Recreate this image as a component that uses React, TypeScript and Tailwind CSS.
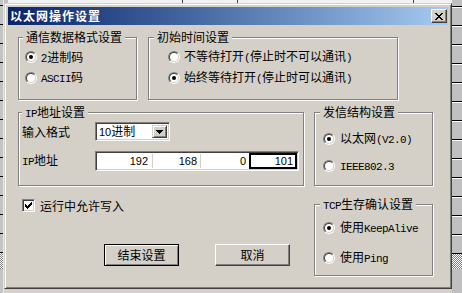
import React from 'react';

// half-width latin in the dialog font (SimSun-like, 6px per char)
const L: React.FC<{ children: React.ReactNode }> = ({ children }) => (
  <span className="font-['Liberation_Mono',monospace] text-[11px] tracking-[-0.6px]">{children}</span>
);

const Radio: React.FC<{ checked?: boolean }> = ({ checked }) => (
  <div className="w-[12px] h-[12px] shrink-0 rounded-full border border-t-[#808080] border-l-[#808080] border-r-white border-b-white">
    <div className="w-full h-full rounded-full border border-t-[#404040] border-l-[#404040] border-r-[#d4d0c8] border-b-[#d4d0c8] bg-white flex items-center justify-center">
      {checked && <div className="w-[4px] h-[4px] rounded-full bg-black" />}
    </div>
  </div>
);

const RadioRow: React.FC<{ checked?: boolean; gap: string; children: React.ReactNode }> = ({ checked, gap, children }) => (
  <div className={`flex items-center h-[12px] whitespace-nowrap ${gap}`}>
    <Radio checked={checked} />
    <span>{children}</span>
  </div>
);

const Group: React.FC<{ label: React.ReactNode; labelPos: string; className: string; children?: React.ReactNode }> = ({
  label,
  labelPos,
  className,
  children,
}) => (
  <div className={`relative shrink-0 border border-[#808080] shadow-[inset_1px_1px_0_#fff,1px_1px_0_#fff] ${className}`}>
    <div className={`absolute -top-[7px] px-[3px] bg-[#d4d0c8] leading-[12px] whitespace-nowrap ${labelPos}`}>{label}</div>
    {children}
  </div>
);

const CloseGlyph = () => (
  <svg width="8" height="7" viewBox="0 0 8 7" shapeRendering="crispEdges">
    <g fill="#000">
      <rect x="0" y="0" width="2" height="1" />
      <rect x="6" y="0" width="2" height="1" />
      <rect x="1" y="1" width="2" height="1" />
      <rect x="5" y="1" width="2" height="1" />
      <rect x="2" y="2" width="4" height="1" />
      <rect x="3" y="3" width="2" height="1" />
      <rect x="2" y="4" width="4" height="1" />
      <rect x="1" y="5" width="2" height="1" />
      <rect x="5" y="5" width="2" height="1" />
      <rect x="0" y="6" width="2" height="1" />
      <rect x="6" y="6" width="2" height="1" />
    </g>
  </svg>
);

const sunken =
  'border border-t-[#808080] border-l-[#808080] border-r-white border-b-white shadow-[inset_1px_1px_0_#404040,inset_-1px_-1px_0_#d4d0c8]';

const App: React.FC = () => {
  const leftCells = Array.from({ length: 13 });
  const rightCells = Array.from({ length: 13 });

  return (
    <div className="relative w-[462px] h-[293px] overflow-hidden bg-[#d4d0c8] text-black text-[12px] leading-[12px] font-['Noto_Sans_CJK_SC',sans-serif]">
      {/* desktop behind the dialog */}
      <div className="absolute left-0 top-0 w-full h-[3px] bg-[#f2f2f2] flex">
        <div className="w-[8px] h-full bg-[#c0c0c0]" />
        <div className="w-[175px] h-full border-r border-[#404040]" />
        <div className="w-[55px] h-full border-r border-[#404040]" />
        <div className="w-[176px] h-full border-r border-[#404040]" />
      </div>
      <div className="absolute left-0 top-0 w-[4px] h-full bg-[#c4c4c4] border-r border-[#e8e8e8] flex flex-col">
        <div className="h-[6px] shrink-0 border-b border-black" />
        {leftCells.map((_, i) => (
          <div key={i} className="h-[19px] shrink-0 border-b border-black" />
        ))}
        <div className="h-[16px] shrink-0 bg-[repeating-conic-gradient(#808080_0_25%,#fff_0_50%)] bg-[length:2px_2px]" />
      </div>
      <div className="absolute left-[452px] top-0 w-[10px] h-full bg-[#c0c0c0] flex flex-col">
        <div className="h-[7px] shrink-0 border-b border-black" />
        {rightCells.map((_, i) => (
          <div key={i} className="h-[19px] shrink-0 border-t border-t-white border-b border-b-black" />
        ))}
        <div className="h-[15px] shrink-0 bg-[repeating-conic-gradient(#808080_0_25%,#fff_0_50%)] bg-[length:2px_2px]" />
      </div>

      {/* dialog window */}
      <div className="absolute left-[4px] top-[3px] w-[448px] h-[286px] bg-[#d4d0c8] border border-t-[#d4d0c8] border-l-[#d4d0c8] border-r-[#404040] border-b-[#404040] shadow-[inset_1px_1px_0_#fff,inset_-1px_-1px_0_#808080] p-[3px] flex flex-col">
        <div className="h-[18px] shrink-0 flex items-center justify-between bg-linear-to-r from-[#0a246a] to-[#a6caf0]">
          <span className="pl-[2px] text-white font-bold tracking-[1px]">以太网操作设置</span>
          <div className="mr-[1px] w-[16px] h-[14px] flex items-center justify-center bg-[#d4d0c8] border border-t-white border-l-white border-r-[#404040] border-b-[#404040] shadow-[inset_-1px_-1px_0_#808080]">
            <CloseGlyph />
          </div>
        </div>

        <div className="flex flex-col">
          {/* row 1 */}
          <div className="flex mt-[12px] pl-[10px]">
            <Group label="通信数据格式设置" labelPos="left-[4px]" className="w-[119px] h-[63px]">
              <div className="flex flex-col gap-[9px] pt-[13px] pl-[6px]">
                <RadioRow checked gap="gap-[4px]">
                  <span className="font-['Liberation_Sans',sans-serif] text-[11px]">2</span>进制码
                </RadioRow>
                <RadioRow gap="gap-[4px]">
                  <L>ASCII</L>码
                </RadioRow>
              </div>
            </Group>
            <Group label="初始时间设置" labelPos="left-[5px]" className="ml-[11px] w-[250px] h-[63px]">
              <div className="flex flex-col gap-[9px] pt-[13px] pl-[19px]">
                <RadioRow gap="gap-[4px]">
                  不等待打开<L>(</L>停止时不可以通讯<L>)</L>
                </RadioRow>
                <RadioRow checked gap="gap-[4px]">
                  始终等待打开<L>(</L>停止时可以通讯<L>)</L>
                </RadioRow>
              </div>
            </Group>
          </div>

          {/* row 2 */}
          <div className="flex mt-[12px] pl-[10px]">
            <Group
              label={
                <>
                  <L>IP</L>地址设置
                </>
              }
              labelPos="left-[3px]"
              className="w-[286px] h-[74px]"
            >
              <div className="flex flex-col pt-[9px] pl-[3px]">
                <div className="flex items-center h-[19px]">
                  <span className="w-[73px]">输入格式</span>
                  <div className={`w-[75px] h-[19px] bg-white flex items-stretch ${sunken} p-[2px]`}>
                    <div className="flex-1 flex items-center pl-[1px] font-['Liberation_Sans','Noto_Sans_CJK_SC',sans-serif]">
                      <span className="text-[11px]">10</span>进制
                    </div>
                    <div className="w-[15px] flex items-center justify-center bg-[#d4d0c8] border border-t-[#d4d0c8] border-l-[#d4d0c8] border-r-[#404040] border-b-[#404040] shadow-[inset_1px_1px_0_#fff,inset_-1px_-1px_0_#808080]">
                      <svg width="7" height="4" viewBox="0 0 7 4" shapeRendering="crispEdges">
                        <path d="M0 0H7V1H6V2H5V3H4V4H3V3H2V2H1V1H0Z" fill="#000" />
                      </svg>
                    </div>
                  </div>
                </div>
                <div className="flex items-center h-[20px] mt-[10px]">
                  <span className="w-[73px]">
                    <L>IP</L>地址
                  </span>
                  <div className={`w-[204px] h-[20px] bg-white flex p-[2px] font-['Liberation_Sans',sans-serif] text-[11px] ${sunken}`}>
                    <div className="w-[55px] flex items-center justify-end pr-[4px] border-r border-[#d4d0c8]">192</div>
                    <div className="w-[48px] flex items-center justify-end pr-[3px] border-r border-[#d4d0c8]">168</div>
                    <div className="w-[48px] flex items-center justify-end pr-[3px]">0</div>
                    <div className="flex-1 -my-[1px] -mr-[1px] flex items-center justify-end pr-[2px] border-2 border-black">101</div>
                  </div>
                </div>
              </div>
            </Group>
            <Group label="发信结构设置" labelPos="left-[5px]" className="ml-[10px] w-[119px] h-[74px]">
              <div className="flex flex-col gap-[15px] pt-[20px] pl-[8px]">
                <RadioRow checked gap="gap-[5px]">
                  以太网<L>(V2.0)</L>
                </RadioRow>
                <RadioRow gap="gap-[5px]">
                  <L>IEEE802.3</L>
                </RadioRow>
              </div>
            </Group>
          </div>

          {/* row 3 */}
          <div className="flex pl-[10px]">
            <div className="w-[296px] shrink-0 flex flex-col">
              <div className="flex items-center gap-[5px] mt-[13px] pl-[4px] h-[13px]">
                <div className={`w-[13px] h-[13px] bg-white flex items-center justify-center ${sunken}`}>
                  <svg width="7" height="7" viewBox="0 0 7 7" shapeRendering="crispEdges">
                    <path
                      d="M6 0H7V3H6V4H5V5H4V6H3V7H2V6H1V5H0V2H1V3H2V4H3V3H4V2H5V1H6Z"
                      fill="#000"
                    />
                  </svg>
                </div>
                <span>运行中允许写入</span>
              </div>
              <div className="flex mt-[32px] pl-[86px]">
                <div className="w-[75px] h-[22px] flex items-center justify-center border border-black shadow-[inset_1px_1px_0_#fff,inset_-1px_-1px_0_#808080]">
                  结束设置
                </div>
                <div className="ml-[36px] w-[75px] h-[22px] flex items-center justify-center border border-t-white border-l-white border-r-[#404040] border-b-[#404040] shadow-[inset_-1px_-1px_0_#808080]">
                  取消
                </div>
              </div>
            </div>
            <Group
              label={
                <>
                  <L>TCP</L>生存确认设置
                </>
              }
              labelPos="left-[5px]"
              className="mt-[18px] w-[119px] h-[72px]"
            >
              <div className="flex flex-col gap-[18px] pt-[17px] pl-[8px]">
                <RadioRow checked gap="gap-[5px]">
                  使用<L>KeepAlive</L>
                </RadioRow>
                <RadioRow gap="gap-[5px]">
                  使用<L>Ping</L>
                </RadioRow>
              </div>
            </Group>
          </div>
        </div>
      </div>
    </div>
  );
};

export default App;
